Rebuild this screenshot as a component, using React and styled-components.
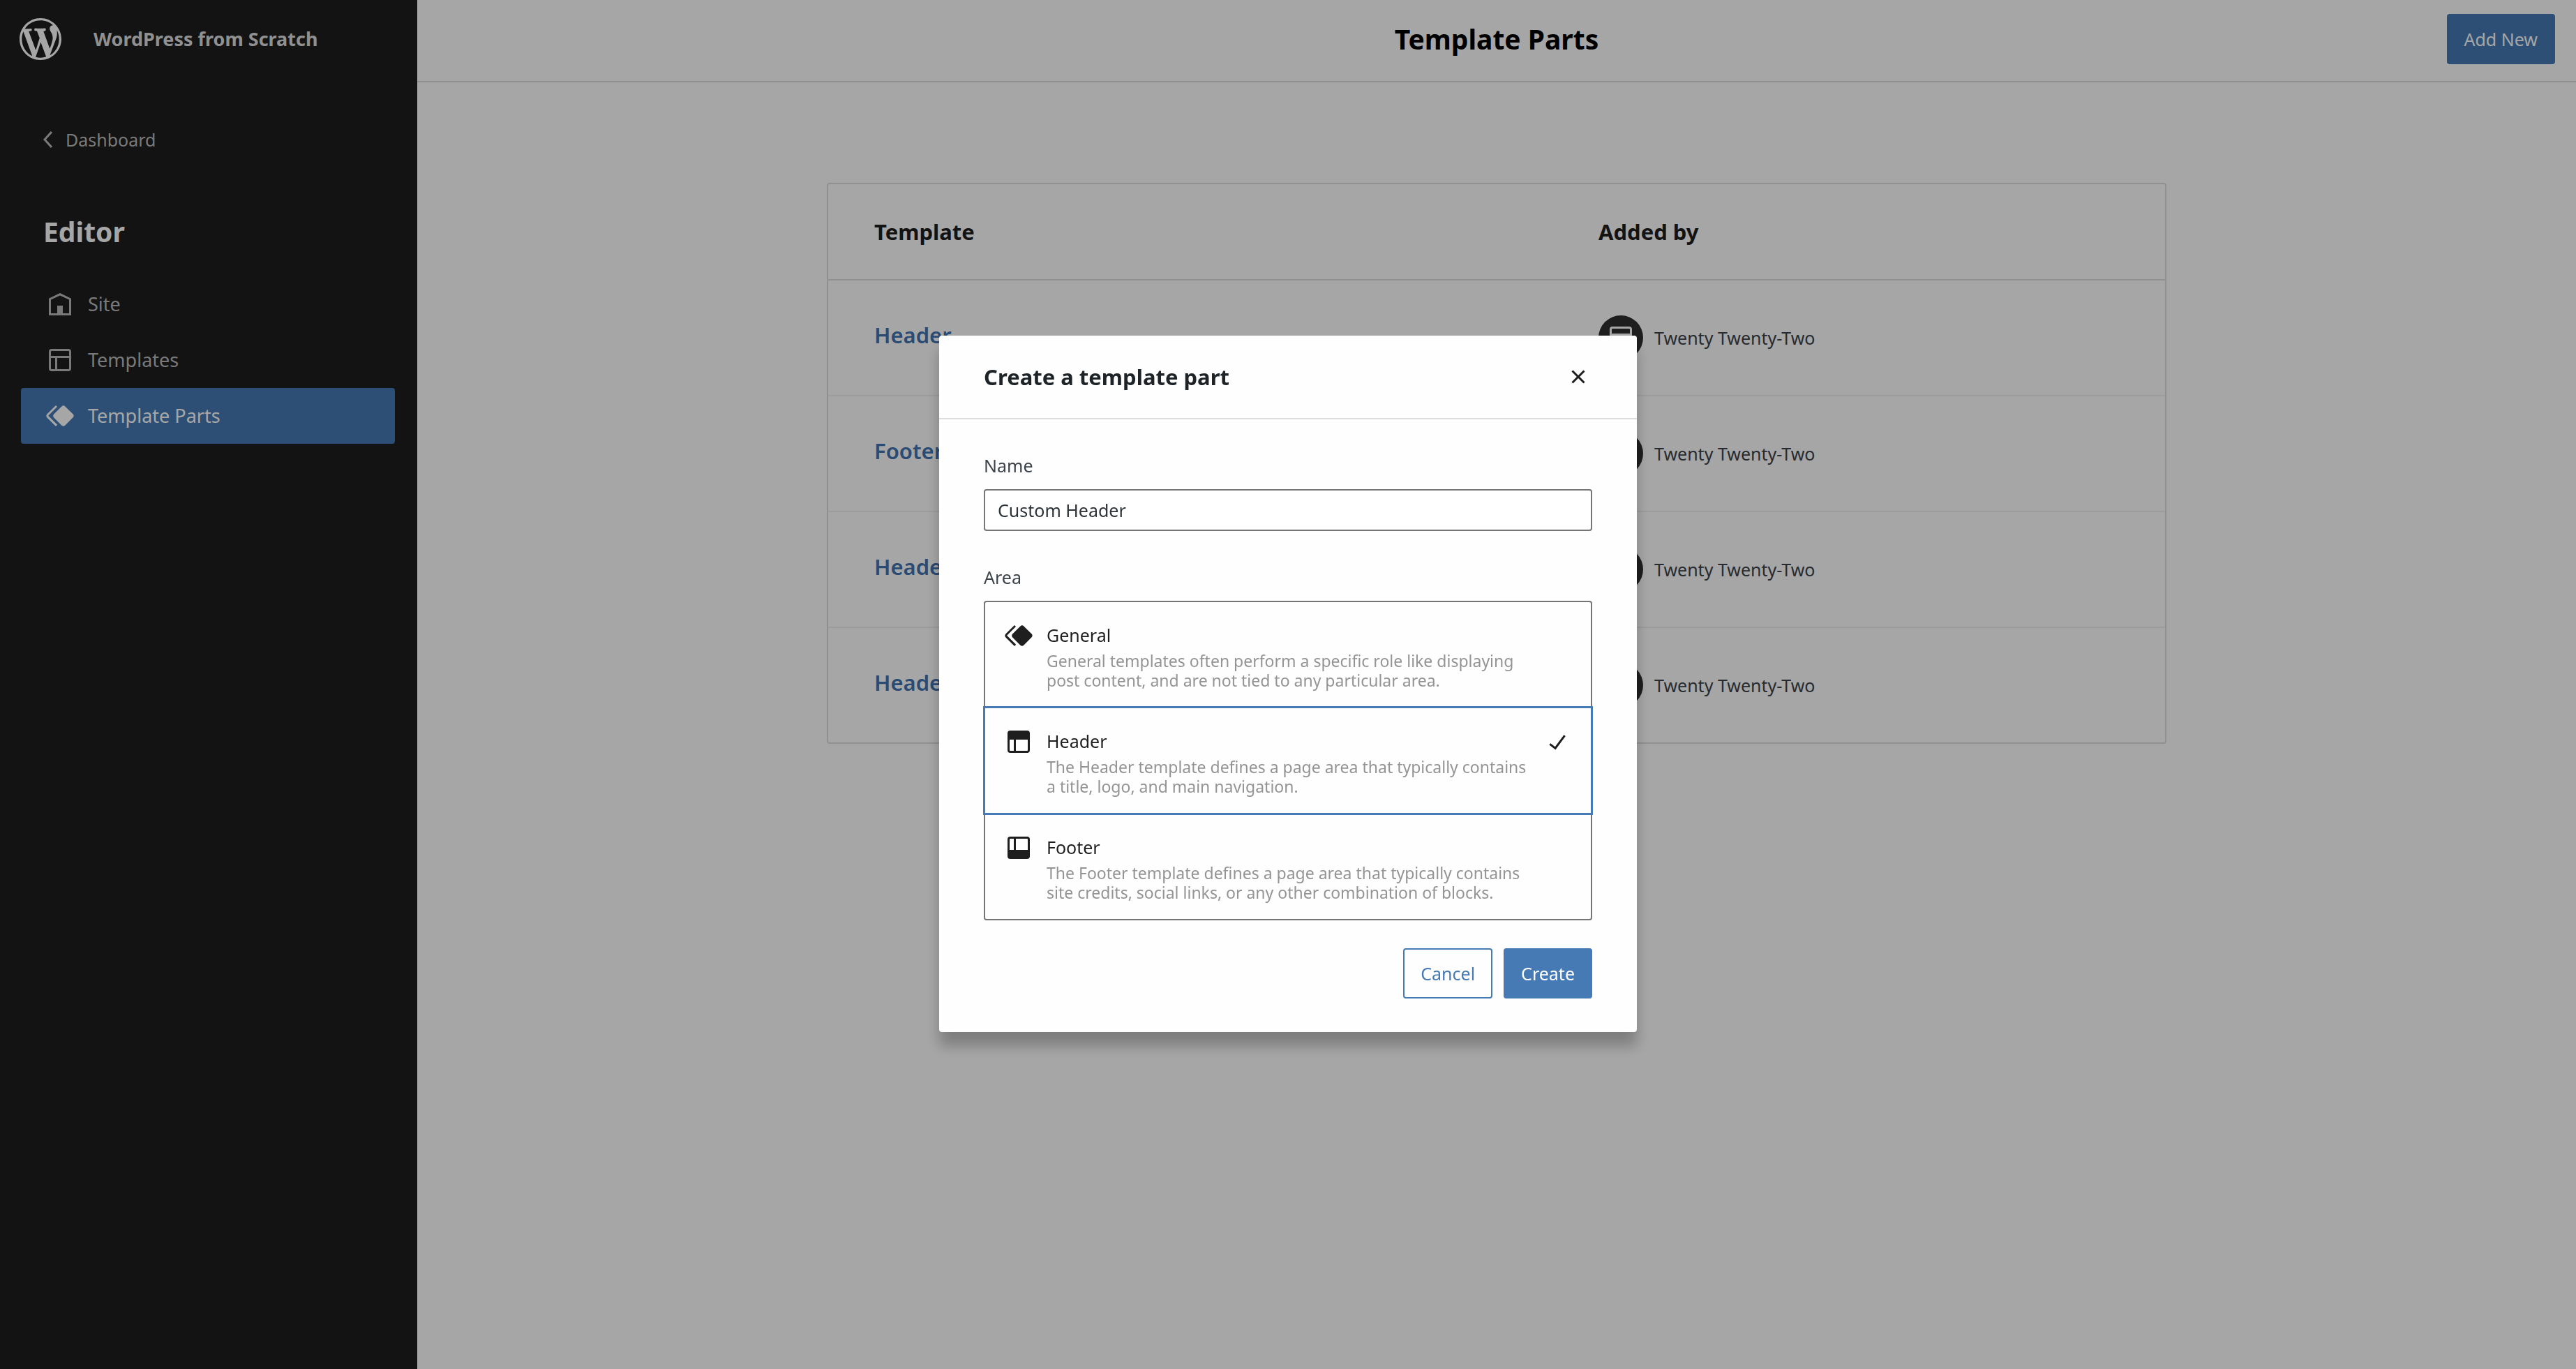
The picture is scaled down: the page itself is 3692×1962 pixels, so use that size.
import React, { useState } from "react";
import styled, { createGlobalStyle, css } from "styled-components";

const color = {
  ink: "#1e1e1e",
  accent: "#457ab5",
  link: "#4173b1",
  line: "#dddddd",
  rowLine: "#f0f0f0",
  control: "#757575",
  muted: "#949494",
  text: "#3c434a",
};

const GlobalStyle = createGlobalStyle`
  *, *::before, *::after { box-sizing: border-box; }
  body {
    margin: 0;
    background: #ffffff;
    color: ${color.text};
    font-family: "Noto Sans", "Open Sans", sans-serif;
    font-size: 25px;
    line-height: 36px;
  }
  h1, h2, p, ul { margin: 0; padding: 0; }
  button, input { font: inherit; }
`;

const PATHS = {
  chevronLeft: "M14.6 7l-1.2-1L8 12l5.4 6 1.2-1-4.6-5z",
  home: "M12 4L4 7.9V20h16V7.9L12 4zm6.5 14.5H14V13h-4v5.5H5.5V8.8L12 5.7l6.5 3.1v9.7z",
  layout:
    "M18 5.5H6a.5.5 0 00-.5.5v3h13V6a.5.5 0 00-.5-.5zm.5 5H10v8h8a.5.5 0 00.5-.5v-7.5zm-10 0h-3V18a.5.5 0 00.5.5h2.5v-8zM6 4h12a2 2 0 012 2v12a2 2 0 01-2 2H6a2 2 0 01-2-2V6a2 2 0 012-2z",
  symbol:
    "M21.3 10.8l-5.6-5.6c-.7-.7-1.8-.7-2.5 0l-5.6 5.6c-.7.7-.7 1.8 0 2.5l5.6 5.6c.3.3.8.5 1.2.5s.9-.2 1.2-.5l5.6-5.6c.8-.7.8-1.9.1-2.5zm-17.6 1L10 5.5l-1-1-6.3 6.3c-.7.7-.7 1.8 0 2.5L9 19.5l1.1-1.1-6.3-6.3c-.2 0-.2-.2-.1-.3z",
  header:
    "M18.5 10.5H10v8h8a.5.5 0 00.5-.5v-7.5zm-10 0h-3V18a.5.5 0 00.5.5h2.5v-8zM6 4h12a2 2 0 012 2v12a2 2 0 01-2 2H6a2 2 0 01-2-2V6a2 2 0 012-2z",
  footer:
    "M18 5.5h-8v8h8.5V6a.5.5 0 00-.5-.5zm-9.5 8h-3V6a.5.5 0 01.5-.5h2.5v8zM6 4h12a2 2 0 012 2v12a2 2 0 01-2 2H6a2 2 0 01-2-2V6a2 2 0 012-2z",
  check: "M16.7 7.1l-6.3 8.5-3.3-2.5-.9 1.2 4.5 3.4L17.9 8z",
  close:
    "M12 13.06l3.712 3.713 1.061-1.06L13.061 12l3.712-3.712-1.06-1.06L12 10.938 8.288 7.227l-1.061 1.06L10.939 12l-3.712 3.712 1.06 1.061L12 13.061z",
};

const IconSvg = styled.svg`
  display: block;
  flex: none;
  width: 48px;
  height: 48px;
  fill: currentColor;
`;

function Icon({ name }) {
  return (
    <IconSvg viewBox="0 0 24 24" aria-hidden="true">
      <path d={PATHS[name]} fillRule="evenodd" />
    </IconSvg>
  );
}

const Logo = styled.svg`
  display: block;
  flex: none;
  width: 72px;
  height: 72px;
  fill: #ffffff;
`;

function WordPressLogo() {
  return (
    <Logo viewBox="-2 -2 24 24" aria-hidden="true">
      <path d="M20 10c0-5.51-4.49-10-10-10C4.48 0 0 4.49 0 10c0 5.52 4.48 10 10 10 5.51 0 10-4.48 10-10zM7.78 15.37L4.37 6.22c.55-.02 1.17-.08 1.17-.08.5-.06.44-1.13-.06-1.11 0 0-1.45.11-2.37.11-.18 0-.37 0-.58-.01C4.12 2.69 6.87 1.11 10 1.11c2.33 0 4.45.87 6.05 2.34-.68-.11-1.65.39-1.65 1.58 0 .74.45 1.36.9 2.1.35.61.55 1.36.55 2.46 0 1.49-1.4 5-1.4 5l-3.03-8.37c.54-.02.82-.17.82-.17.5-.05.44-1.25-.06-1.22 0 0-1.44.12-2.38.12-.87 0-2.33-.12-2.33-.12-.5-.03-.56 1.2-.06 1.22l.92.08 1.26 3.41zM17.41 10c.24-.64.74-1.87.43-4.25.7 1.29 1.05 2.71 1.05 4.25 0 3.29-1.73 6.24-4.4 7.78.97-2.59 1.94-5.2 2.92-7.78zM6.1 18.09C3.12 16.65 1.11 13.53 1.11 10c0-1.3.23-2.48.72-3.59C3.25 10.3 4.67 14.2 6.1 18.09zm4.03-6.63l2.58 6.98c-.86.29-1.76.45-2.71.45-.79 0-1.57-.11-2.29-.33.81-2.38 1.62-4.74 2.42-7.1z" />
    </Logo>
  );
}

const Shell = styled.div`
  display: grid;
  grid-template-columns: 598px minmax(0, 1fr);
  min-height: 100vh;
`;

const Sidebar = styled.aside`
  background: ${color.ink};
  color: #bbbbbb;
`;

const SiteHub = styled.header`
  display: flex;
  align-items: center;
  gap: 40px;
  height: 112px;
  padding: 0 22px;
`;

const SiteTitle = styled.span`
  color: ${color.line};
  font-size: 27px;
  font-weight: 700;
`;

const SideNav = styled.nav`
  padding: 64px 32px 0 30px;
`;

const BackLink = styled.a`
  display: flex;
  align-items: center;
  height: 48px;
  padding-left: 16px;
  color: inherit;
  text-decoration: none;
`;

const SideHeading = styled.h2`
  margin-top: 84px;
  padding-left: 32px;
  color: #ffffff;
  font-size: 39px;
  line-height: 48px;
`;

const NavList = styled.ul`
  margin-top: 40px;
  list-style: none;
`;

const NavLink = styled.a`
  display: flex;
  align-items: center;
  gap: 16px;
  height: 80px;
  padding: 0 32px;
  border-radius: 4px;
  color: inherit;
  font-size: 27px;
  text-decoration: none;
  ${({ $active }) =>
    $active &&
    css`
      background: ${color.accent};
      color: #ffffff;
    `}
`;

const PageHeader = styled.header`
  display: grid;
  grid-template-columns: 1fr auto 1fr;
  align-items: center;
  height: 118px;
  padding: 0 30px 4px;
  border-bottom: 2px solid ${color.line};
`;

const PageTitle = styled.h1`
  grid-column: 2;
  color: #000000;
  font-size: 39px;
  line-height: 48px;
`;

const Button = styled.button`
  height: 72px;
  padding: 0 25px;
  border: 0;
  border-radius: 4px;
  background: ${color.accent};
  color: #ffffff;
  cursor: pointer;
  ${({ $outline }) =>
    $outline &&
    css`
      background: transparent;
      color: ${color.accent};
      box-shadow: inset 0 0 0 2px ${color.accent};
    `}
`;

const HeaderActions = styled.div`
  justify-self: end;
`;

const Content = styled.div`
  padding: 144px 64px;
`;

const Table = styled.table`
  width: 100%;
  max-width: 1920px;
  margin: 0 auto;
  border: 2px solid ${color.line};
  border-radius: 4px;
  border-spacing: 0;
  table-layout: fixed;
`;

const HeadCell = styled.th`
  width: ${({ $width }) => $width || "auto"};
  height: 138px;
  padding: 0 66px;
  border-bottom: 2px solid ${color.line};
  color: ${color.ink};
  font-size: 31px;
  text-align: left;
`;

const Cell = styled.td`
  height: 166px;
  padding: 0 66px;
  border-bottom: 2px solid ${color.rowLine};
  tr:last-child > & {
    height: 164px;
    border-bottom: 0;
  }
`;

const TemplateLink = styled.a`
  display: block;
  padding-bottom: 8px;
  color: ${color.link};
  font-size: 31px;
  font-weight: 600;
  text-decoration: none;
`;

const Author = styled.div`
  display: flex;
  align-items: center;
  gap: 16px;
`;

const Avatar = styled.span`
  display: grid;
  place-items: center;
  width: 64px;
  height: 64px;
  border-radius: 50%;
  background: #2f2f2f;
  color: #ffffff;
`;

const Overlay = styled.div`
  position: fixed;
  inset: 0;
  display: flex;
  align-items: center;
  justify-content: center;
  padding-bottom: 2px;
  background: rgba(0, 0, 0, 0.35);
`;

const Dialog = styled.section`
  width: 1000px;
  max-width: 100%;
  border-radius: 4px;
  background: #fefefe;
  box-shadow: 0 20px 20px rgba(0, 0, 0, 0.25);
`;

const DialogHeader = styled.header`
  display: flex;
  align-items: center;
  justify-content: space-between;
  height: 120px;
  padding: 0 60px 0 64px;
  border-bottom: 2px solid ${color.line};
`;

const DialogTitle = styled.h2`
  color: #1d2327;
  font-size: 31px;
`;

const IconButton = styled.button`
  padding: 0;
  border: 0;
  background: none;
  color: ${color.ink};
  cursor: pointer;
`;

const Form = styled.form`
  display: flex;
  flex-direction: column;
  gap: 48px;
  padding: 48px 64px;
`;

const Field = styled.div`
  display: flex;
  flex-direction: column;
  gap: 16px;
`;

const TextInput = styled.input`
  width: 100%;
  height: 60px;
  padding: 0 18px;
  border: 2px solid ${color.control};
  border-radius: 4px;
  background: #ffffff;
  color: #2c3338;
`;

const OptionList = styled.div`
  display: grid;
  gap: 2px;
  border: 2px solid ${color.control};
  border-radius: 4px;
`;

const Option = styled.label`
  position: relative;
  display: grid;
  grid-template-columns: 48px minmax(0, 1fr) 48px;
  align-items: start;
  column-gap: 16px;
  padding: 24px;
  color: ${color.ink};
  cursor: pointer;
  ${({ $selected }) =>
    $selected &&
    css`
      z-index: 1;
      box-shadow: 0 0 0 3px ${color.accent};
    `}
`;

const HiddenRadio = styled.input`
  position: absolute;
  inset: 0;
  width: 100%;
  height: 100%;
  margin: 0;
  opacity: 0;
  cursor: pointer;
`;

const OptionName = styled.span`
  display: block;
  line-height: 46px;
`;

const OptionText = styled.span`
  display: block;
  color: ${color.muted};
  font-size: 23px;
  line-height: 28px;
`;

const Actions = styled.div`
  display: flex;
  justify-content: flex-end;
  gap: 16px;
  margin-top: -8px;
`;

const NAV = [
  { label: "Site", icon: "home" },
  { label: "Templates", icon: "layout" },
  { label: "Template Parts", icon: "symbol", active: true },
];

const PARTS = [
  { id: 1, name: "Header" },
  { id: 2, name: "Footer" },
  { id: 3, name: "Header" },
  { id: 4, name: "Header" },
];

const AREAS = [
  {
    id: "general",
    icon: "symbol",
    name: "General",
    text: "General templates often perform a specific role like displaying post content, and are not tied to any particular area.",
  },
  {
    id: "header",
    icon: "header",
    name: "Header",
    text: "The Header template defines a page area that typically contains a title, logo, and main navigation.",
  },
  {
    id: "footer",
    icon: "footer",
    name: "Footer",
    text: "The Footer template defines a page area that typically contains site credits, social links, or any other combination of blocks.",
  },
];

function CreatePartDialog() {
  const [name, setName] = useState("Custom Header");
  const [area, setArea] = useState("header");

  return (
    <Overlay>
      <Dialog role="dialog" aria-modal="true" aria-labelledby="dialog-title">
        <DialogHeader>
          <DialogTitle id="dialog-title">Create a template part</DialogTitle>
          <IconButton type="button" aria-label="Close">
            <Icon name="close" />
          </IconButton>
        </DialogHeader>
        <Form onSubmit={(event) => event.preventDefault()}>
          <Field>
            <label htmlFor="part-name">Name</label>
            <TextInput
              id="part-name"
              type="text"
              value={name}
              onChange={(event) => setName(event.target.value)}
            />
          </Field>
          <Field role="radiogroup" aria-labelledby="area-label">
            <span id="area-label">Area</span>
            <OptionList>
              {AREAS.map((item) => (
                <Option key={item.id} $selected={item.id === area}>
                  <HiddenRadio
                    type="radio"
                    name="area"
                    value={item.id}
                    checked={item.id === area}
                    onChange={() => setArea(item.id)}
                  />
                  <Icon name={item.icon} />
                  <span>
                    <OptionName>{item.name}</OptionName>
                    <OptionText>{item.text}</OptionText>
                  </span>
                  {item.id === area && <Icon name="check" />}
                </Option>
              ))}
            </OptionList>
          </Field>
          <Actions>
            <Button type="button" $outline>
              Cancel
            </Button>
            <Button type="submit">Create</Button>
          </Actions>
        </Form>
      </Dialog>
    </Overlay>
  );
}

export default function App() {
  return (
    <>
      <GlobalStyle />
      <Shell>
        <Sidebar>
          <SiteHub>
            <WordPressLogo />
            <SiteTitle>WordPress from Scratch</SiteTitle>
          </SiteHub>
          <SideNav>
            <BackLink href="#dashboard">
              <Icon name="chevronLeft" />
              Dashboard
            </BackLink>
            <SideHeading>Editor</SideHeading>
            <NavList>
              {NAV.map((item) => (
                <li key={item.label}>
                  <NavLink
                    href={"#" + item.icon}
                    $active={item.active}
                    aria-current={item.active ? "page" : undefined}
                  >
                    <Icon name={item.icon} />
                    {item.label}
                  </NavLink>
                </li>
              ))}
            </NavList>
          </SideNav>
        </Sidebar>
        <main>
          <PageHeader>
            <PageTitle>Template Parts</PageTitle>
            <HeaderActions>
              <Button type="button">Add New</Button>
            </HeaderActions>
          </PageHeader>
          <Content>
            <Table>
              <thead>
                <tr>
                  <HeadCell scope="col">Template</HeadCell>
                  <HeadCell scope="col" $width="878px">
                    Added by
                  </HeadCell>
                </tr>
              </thead>
              <tbody>
                {PARTS.map((part) => (
                  <tr key={part.id}>
                    <Cell>
                      <TemplateLink href={"#part-" + part.id}>
                        {part.name}
                      </TemplateLink>
                    </Cell>
                    <Cell>
                      <Author>
                        <Avatar>
                          <Icon name="layout" />
                        </Avatar>
                        Twenty Twenty-Two
                      </Author>
                    </Cell>
                  </tr>
                ))}
              </tbody>
            </Table>
          </Content>
        </main>
      </Shell>
      <CreatePartDialog />
    </>
  );
}
